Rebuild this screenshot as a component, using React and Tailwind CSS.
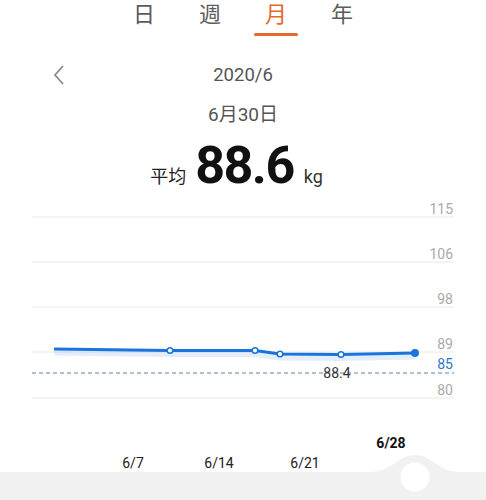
import { useState } from 'react'

const FONT = { fontFamily: "Roboto, 'Noto Sans CJK SC', 'Noto Sans', sans-serif" }

const tabs = ['日', '週', '月', '年']

const gridLines = [
  { y: 217, label: '115' },
  { y: 262, label: '106' },
  { y: 307, label: '98' },
  { y: 352, label: '89' },
  { y: 398, label: '80' },
]

const points = [
  { x: 54, y: 349 },
  { x: 170, y: 350.5, dot: true },
  { x: 255, y: 350.5, dot: true },
  { x: 280, y: 354, dot: true },
  { x: 341, y: 354.5, dot: true },
  { x: 415, y: 353 },
]

const xLabels = [
  { x: 133, label: '6/7' },
  { x: 219, label: '6/14' },
  { x: 305, label: '6/21' },
]

function Tabs({ active, onChange }) {
  return (
    <div className="flex justify-center h-[36px]">
      {tabs.map((t, i) => (
        <button
          key={t}
          onClick={() => onChange(i)}
          className="w-[66px] flex flex-col items-center"
        >
          <span
            className={`text-[22px] leading-[30px] ${i === active ? 'text-[#e5692b]' : 'text-[#5c5c5c]'}`}
          >
            {t}
          </span>
          {i === active && <span className="block w-[44px] h-[3px] mt-[3px] bg-[#e5692b] rounded-full" />}
        </button>
      ))}
    </div>
  )
}

function Chart() {
  const line = points.map(p => `${p.x},${p.y}`).join(' ')
  return (
    <svg width="486" height="300" viewBox="0 200 486 300" className="block">
      <defs>
        <linearGradient id="cursor" x1="0" y1="0" x2="0" y2="1">
          <stop offset="0" stopColor="#6a8cab" stopOpacity="0" />
          <stop offset="0.15" stopColor="#6a8cab" stopOpacity="0.9" />
          <stop offset="0.85" stopColor="#6a8cab" stopOpacity="0.9" />
          <stop offset="1" stopColor="#6a8cab" stopOpacity="0" />
        </linearGradient>
      </defs>

      {/* grid */}
      {gridLines.map(g => (
        <g key={g.label}>
          <line x1="32" x2="454" y1={g.y} y2={g.y} stroke="#e9e9e9" strokeWidth="1.2" />
          <text x="453" y={g.y - 3} textAnchor="end" fontSize="14" fill="#a9a9a9">{g.label}</text>
        </g>
      ))}

      {/* target */}
      <line x1="32" x2="454" y1="373" y2="373" stroke="#5f84a6" strokeWidth="1.2" strokeDasharray="4 3" />
      <text x="453" y="369" textAnchor="end" fontSize="14" fill="#2f78c8">85</text>
      <text x="337" y="377.5" textAnchor="middle" fontSize="14" fill="#333">88.4</text>

      {/* cursor */}
      <line x1="415" x2="415" y1="222" y2="432" stroke="url(#cursor)" strokeWidth="1.2" />

      {/* weight line */}
      <polyline points={line} fill="none" stroke="#1976d2" strokeOpacity="0.12" strokeWidth="7" transform="translate(0,3)" />
      <polyline points={line} fill="none" stroke="#1a74dc" strokeWidth="3" strokeLinejoin="round" />
      {points.filter(p => p.dot).map(p => (
        <circle key={p.x} cx={p.x} cy={p.y} r="2.8" fill="#fff" stroke="#1a74dc" strokeWidth="1.5" />
      ))}
      <circle cx="415" cy="353" r="4" fill="#1a74dc" />

      {/* x axis */}
      {xLabels.map(l => (
        <text key={l.label} x={l.x} y="468" textAnchor="middle" fontSize="14" fill="#222">{l.label}</text>
      ))}
      <text x="391" y="448" textAnchor="middle" fontSize="14" fontWeight="bold" fill="#111">6/28</text>

      {/* scrubber */}
      <path
        d="M0,472 H370 C392,472 398,455 415,455 C432,455 438,472 460,472 H486 V500 H0 Z"
        fill="#f1f1f1"
      />
      <circle cx="415" cy="477" r="14.5" fill="#fff" />
    </svg>
  )
}

export default function App() {
  const [tab, setTab] = useState(2)

  return (
    <div className="w-[486px] h-[500px] bg-white overflow-hidden" style={FONT}>
      <div className="h-[200px]">
        <Tabs active={tab} onChange={setTab} />

        <div className="relative mt-[24px] h-[30px] flex items-center justify-center">
          <svg width="14" height="22" viewBox="0 0 14 22" className="absolute left-[52px] top-[4px]">
            <polyline points="11,2 3,11 11,20" fill="none" stroke="#8a8a8a" strokeWidth="1.8" />
          </svg>
          <span className="text-[18.5px] leading-[30px] text-[#555]">2020/6</span>
        </div>

        <div className="mt-[10px] h-[30px] flex items-center justify-center">
          <span className="text-[19px] leading-[30px] text-[#555]">6月30日</span>
        </div>

        <div className="mt-[10px] flex items-baseline justify-center pr-[13px]">
          <span className="text-[18px] text-[#222]">平均</span>
          <span className="ml-[9px] text-[52px] leading-[52px] font-bold tracking-[-1.5px] text-[#111]">88.6</span>
          <span className="ml-[10px] text-[18px] text-[#333]">kg</span>
        </div>
      </div>

      <Chart />
    </div>
  )
}
